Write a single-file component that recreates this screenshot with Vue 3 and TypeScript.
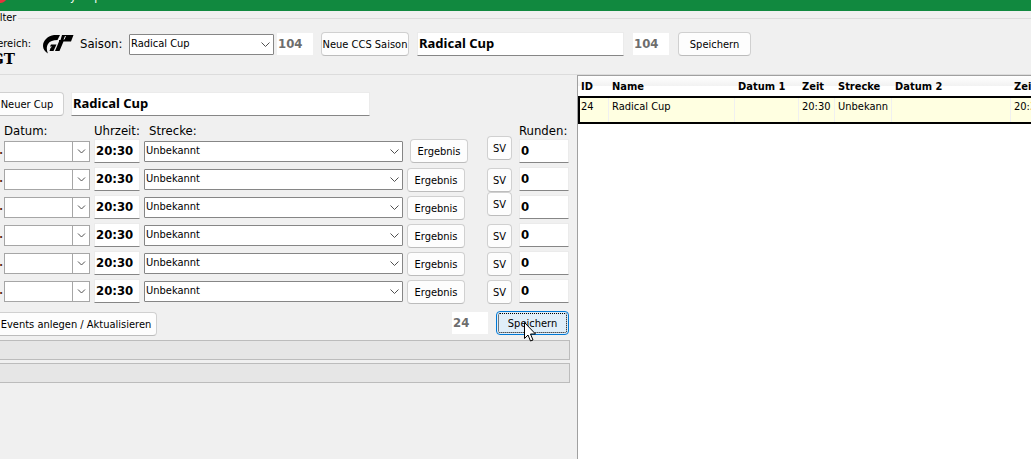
<script setup lang="ts">
import { ref } from 'vue'

interface EventRow {
  id: number
  date: string
  time: string
  track: string
  laps: string
  raised?: boolean
}

const season = ref('Radical Cup')
const seasonName = ref('Radical Cup')
const cupName = ref('Radical Cup')
const seasonId = ref('104')
const cupId = ref('24')

const rows = ref<EventRow[]>(
  [1, 2, 3, 4, 5, 6].map((id) => ({
    id,
    date: '',
    time: '20:30',
    track: 'Unbekannt',
    laps: '0',
    raised: id === 1 || id === 3,
  })),
)

const columns = ['ID', 'Name', 'Datum 1', 'Zeit', 'Strecke', 'Datum 2', 'Zeit']
const cups = [['24', 'Radical Cup', '', '20:30', 'Unbekann', '', '20:30']]
</script>

<template>
  <div class="app">
    <header class="titlebar">
      <span class="app-icon"></span>
      <span class="title">y Cup</span>
    </header>

    <section class="filter">
      <div class="legend"><span>Filter</span></div>
      <div class="filter-row">
        <div class="area"><span>Bereich:</span><b>GT</b></div>
        <svg class="logo" viewBox="0 0 32 20" role="img" aria-label="GT">
          <path d="M18 1H12C6 2 1 6 1 12C1 15 3 18 6 19.500C5 17 4 13 6 10C8 7 11 6 15.500 6Z" />
          <path d="M9 10.500H14.500L11.500 17H7.500L8.500 14L10 12.500H8Z" />
          <path d="M20 1H31.500L29 7.500H21.500L17.500 17H13L17 7.500V6H18.500Z" />
          <path class="cut" d="M23.500 2L22 5.500" />
        </svg>
        <label class="wide-label" for="season">Saison:</label>
        <span class="combo season">
          <select id="season" v-model="season"><option>Radical Cup</option></select>
          <svg class="chevron" viewBox="0 0 9 5"><path d="M.5 .5L4.500 4.500L8.500 .5" /></svg>
        </span>
        <input class="number id-box" :value="seasonId" aria-label="Saison ID" disabled />
        <button class="new-season">Neue CCS Saison</button>
        <input class="name season-name" v-model="seasonName" aria-label="Saison Name" />
        <input class="number id-box" :value="seasonId" aria-label="ID" disabled />
        <button class="save">Speichern</button>
      </div>
    </section>

    <main class="body">
      <section class="editor">
        <div class="cup-row">
          <button class="new-cup">Neuer Cup</button>
          <input class="name cup-name" v-model="cupName" aria-label="Cup Name" />
        </div>

        <div class="grid-row labels">
          <span></span>
          <span>Datum:</span>
          <span>Uhrzeit:</span>
          <span class="track-label">Strecke:</span>
          <span></span>
          <span></span>
          <span>Runden:</span>
        </div>

        <div v-for="row in rows" :key="row.id" class="grid-row" :class="{ raised: row.raised }">
          <span class="index">{{ row.id }}.</span>
          <span class="combo date">
            <input v-model="row.date" :aria-label="`Datum ${row.id}`" />
            <button class="drop" :aria-label="`Kalender ${row.id}`">
              <svg viewBox="0 0 9 5"><path d="M1 .5L4.500 4L8 .5" /></svg>
            </button>
          </span>
          <input class="number" v-model="row.time" :aria-label="`Uhrzeit ${row.id}`" />
          <span class="combo track">
            <select v-model="row.track" :aria-label="`Strecke ${row.id}`"><option>Unbekannt</option></select>
            <svg class="chevron" viewBox="0 0 9 5"><path d="M.5 .5L4.500 4.500L8.500 .5" /></svg>
          </span>
          <button class="result">Ergebnis</button>
          <button class="sv">SV</button>
          <input class="number" v-model="row.laps" :aria-label="`Runden ${row.id}`" />
        </div>

        <div class="actions">
          <button class="events">Events anlegen / Aktualisieren</button>
          <input class="number id-box" :value="cupId" aria-label="Cup ID" disabled />
          <span class="save-wrap">
            <button class="save focused">Speichern</button>
            <svg class="cursor" viewBox="0 0 12 20">
              <path d="M.5 .5V16.500L4 13L6.500 19L9 18L6.500 12H11.500Z" />
            </svg>
          </span>
        </div>
        <div class="bar"></div>
        <div class="bar"></div>
      </section>

      <section class="list">
        <table>
          <colgroup>
            <col class="c-id" /><col class="c-name" /><col class="c-date1" /><col class="c-time" />
            <col class="c-track" /><col class="c-date2" /><col class="c-time" />
          </colgroup>
          <thead>
            <tr><th v-for="(c, i) in columns" :key="i" scope="col">{{ c }}</th></tr>
          </thead>
          <tbody>
            <tr v-for="cup in cups" :key="cup[0]"><td v-for="(c, i) in cup" :key="i">{{ c }}</td></tr>
          </tbody>
        </table>
      </section>
    </main>
  </div>
</template>

<style>
body { background: #f0f0f0; overflow: hidden; }
</style>

<style scoped>
.app {
  display: flex;
  flex-direction: column;
  min-height: 100vh;
  overflow: hidden;
  background: #f0f0f0;
  color: #000;
  font-family: "DejaVu Sans Condensed", "DejaVu Sans", sans-serif;
  font-size: 11px;
  line-height: 14px;
}
.app * { box-sizing: border-box; }
input, select, button { margin: 0; font: inherit; color: inherit; border-radius: 0; outline: none; min-width: 0; }
button {
  height: 24px;
  padding: 1px 0 0;
  flex: none;
  border: 1px solid #d0d0d0;
  border-bottom-color: #bcbcbc;
  border-radius: 4px;
  background: #fdfdfd;
  text-align: center;
  white-space: nowrap;
}

.titlebar {
  position: relative;
  height: 11px;
  overflow: hidden;
  background: #11893f;
  color: #fff;
}
.app-icon {
  position: absolute;
  left: -6px;
  top: -10px;
  width: 13px;
  height: 13px;
  border-radius: 50%;
  background: #e8323c;
}
.title { position: absolute; left: 70px; top: -11px; font-size: 12px; }

.filter { height: 64px; border-bottom: 1px solid #dcdcdc; }
.legend { display: flex; align-items: center; height: 14px; margin-left: -8px; }
.legend::after { content: ""; flex: 1; height: 1px; margin-left: 2px; background: #dcdcdc; }
.filter-row { display: flex; align-items: center; height: 38px; }
.area { position: relative; display: flex; justify-content: flex-end; width: 31px; height: 14px; flex: none; }
.area b {
  position: absolute;
  top: 14px;
  right: 16px;
  font: bold 15px/16px "DejaVu Serif", serif;
}
.logo { width: 32px; height: 20px; margin: 0 6px 0 11px; flex: none; }
.cut { stroke: #f0f0f0; stroke-width: 1; fill: none; }
.wide-label { width: 49px; flex: none; }
.wide-label, .labels { font-size: 13px; }

.combo { position: relative; display: block; height: 21px; }
.combo select {
  display: block;
  appearance: none;
  width: 100%;
  height: 100%;
  padding: 0 20px 0 1px;
  border: 1px solid #868686;
  border-radius: 1px;
  background: #fff;
}
.chevron { position: absolute; right: 4px; top: 8px; width: 9px; height: 5px; }
.chevron path, .drop path { fill: none; stroke: #505050; stroke-width: 1; }
.season { width: 145px; flex: none; }
.date { display: flex; border: 1px solid #a6a6a6; background: #fff; }
.date input { flex: 1; padding: 0 2px; border: 0; background: transparent; }
.drop {
  display: flex;
  align-items: center;
  justify-content: center;
  width: 17px;
  height: 19px;
  border: 0;
  border-left: 1px solid #a6a6a6;
  border-radius: 0;
  background: transparent;
}
.drop svg { width: 9px; height: 5px; }

.number, .name {
  width: 100%;
  height: 24px;
  padding: 0 1px 2px;
  border: 1px solid #ebebeb;
  border-bottom-color: #868686;
  background: #fff;
  font-size: 13px;
  font-weight: bold;
}
.name { font-family: "Noto Sans", sans-serif; }
.id-box { width: 38px; flex: none; border-color: #f0f0f0; color: #6d6d6d; }
.filter-row .id-box { margin-left: 2px; }
.new-season { width: 88px; margin: 0 8px 0 7px; }
.season-name { width: 207px; margin-right: 6px; }
.save { width: 73px; }
.filter-row .save { margin-left: 8px; }

.body { display: flex; flex: 1; }
.editor { flex: 0 0 577px; padding: 17px 7px 0 0; }
.cup-row { display: flex; height: 32px; gap: 7px; }
.new-cup { width: 74px; margin-left: -10px; }
.cup-name { flex: 0 1 299px; }
.grid-row {
  display: grid;
  grid-template-columns: 4px 86px 4px 46px 4px minmax(0, 1fr) 4px 61px 19px 25px 7px 50px;
  grid-template-rows: 28px;
  align-items: center;
  margin-right: 1px;
}
.grid-row > :nth-child(1) { grid-column: 1; }
.grid-row > :nth-child(2) { grid-column: 2; }
.grid-row > :nth-child(3) { grid-column: 4; }
.grid-row > :nth-child(4) { grid-column: 6; }
.grid-row > :nth-child(5) { grid-column: 8; }
.grid-row > :nth-child(6) { grid-column: 10; }
.grid-row > :nth-child(7) { grid-column: 12; }
.grid-row.labels { grid-template-rows: 13px; white-space: nowrap; }
.track-label { padding-left: 5px; }
.index { display: flex; justify-content: flex-end; width: 3px; font-weight: bold; color: #5a2a10; }
.result, .sv { margin-top: 2px; }
.result { width: 58px; }
.labels + .grid-row .result { justify-self: end; margin-top: 0; }
.raised .sv { margin: 0 0 6px; }

.actions { display: flex; height: 35px; padding-top: 6px; }
.events { width: 172px; margin: 1px auto 0 -15px; padding-left: 10px; }
.save-wrap { position: relative; margin: 0 1px 0 7px; }
.focused {
  border: 1px solid #0078d4;
  background: #e0eef9;
  outline: 1px dotted #000;
  outline-offset: -3px;
}
.cursor { position: absolute; left: 28px; top: 11px; width: 12px; height: 20px; pointer-events: none; }
.cursor path { fill: #fff; stroke: #000; stroke-width: 1; }
.bar { height: 20px; margin-bottom: 3px; border: 1px solid #bcbcbc; border-left: 0; background: #e6e6e6; }

.list { flex: 1; min-width: 0; overflow: hidden; border-left: 1px solid #a0a0a0; border-top: 1px solid #a0a0a0; background: #fff; }
table { width: 469px; table-layout: fixed; border-collapse: separate; border-spacing: 0; }
.c-id { width: 31px; }
.c-name { width: 126px; }
.c-date1 { width: 64px; }
.c-time { width: 36px; }
.c-track { width: 57px; }
.c-date2 { width: 119px; }
th, td { padding: 1px 0 0 3px; text-align: left; white-space: nowrap; overflow: hidden; }
th { height: 20px; background: linear-gradient(#fff, #f2f2f2 10px, #fff 10px); }
td {
  height: 28px;
  padding-top: 2px;
  vertical-align: top;
  border: 2px solid #000;
  border-width: 2px 0;
  background: #ffffe1;
  box-shadow: inset -1px 0 #f0f0f0;
}
td:first-child { padding-left: 1px; border-left-width: 2px; }
</style>
